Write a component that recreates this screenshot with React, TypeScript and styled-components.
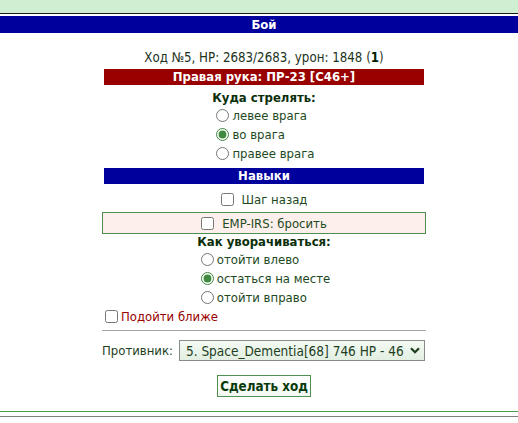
import React from 'react';
import styled, { createGlobalStyle } from 'styled-components';

const GlobalStyle = createGlobalStyle`
  html, body {
    margin: 0;
    padding: 0;
    background: #ffffff;
  }
  body {
    font-family: "DejaVu Sans Condensed", "DejaVu Sans", Verdana, sans-serif;
    font-stretch: condensed;
    font-size: 13px;
    color: #003300;
  }
  input, select, button {
    font-family: inherit;
    font-stretch: inherit;
  }
`;

const Page = styled('div')`
  width: 518px;
  height: 423px;
  overflow: hidden;
`;

const TopBand = styled('div')`
  height: 13px;
  background: #cfeed2;
  border-bottom: 1px solid #1a1a1a;
  margin-bottom: 2px;
`;

const TitleBar = styled('div')`
  height: 17px;
  line-height: 17px;
  padding-left: 10px;
  background: #00009c;
  color: #ffffff;
  font-weight: bold;
  text-align: center;
`;

const Main = styled('div')`
  padding-left: 10px;
`;

const Status = styled('div')`
  margin-top: 17px;
  line-height: 16px;
  text-align: center;
  color: #1c331c;
  font-size: 13.2px;

  b {
    color: #002200;
  }
`;

const Panel = styled('div')`
  width: 324px;
  margin: 3px auto 0;
  display: flex;
  flex-direction: column;
`;

const SectionBar = styled('div')<{ $tone: 'red' | 'navy' }>`
  height: 16px;
  line-height: 16px;
  margin: ${(p) => (p.$tone === 'navy' ? '5px' : '0')} 2px 0;
  background: ${(p) => (p.$tone === 'red' ? '#990000' : '#00009c')};
  color: #ffffff;
  font-weight: bold;
  text-align: center;
`;

const GroupTitle = styled('div')<{ $top?: number }>`
  padding-top: ${(p) => p.$top ?? 0}px;
  line-height: 16px;
  font-weight: bold;
  text-align: center;
  color: #0a2e0a;
`;

const OptionList = styled('div')`
  align-self: center;
  display: flex;
  flex-direction: column;
  padding-left: 3px;
`;

const Option = styled('label')`
  height: 19px;
  display: flex;
  align-items: center;
  color: #1e4a1e;

  input {
    width: 13px;
    height: 13px;
    margin: 0 3px 0 0;
    accent-color: #3f8a3f;
  }
`;

const SkillRow = styled('label')`
  height: 22px;
  margin-top: 4px;
  display: flex;
  align-items: center;
  justify-content: center;
  color: #1e4a1e;

  input {
    width: 13px;
    height: 13px;
    margin: 0 8px 0 0;
  }
`;

const SkillBox = styled(SkillRow)`
  height: 20px;
  margin-top: 2px;
  border: 1px solid #4f8f4f;
  background: #fdefec;
`;

const ApproachRow = styled('label')`
  height: 18px;
  display: flex;
  align-items: center;
  color: #990000;

  input {
    width: 13px;
    height: 13px;
    margin: 0 3px 0 3px;
  }
`;

const Rule = styled('div')`
  margin-top: 5px;
  border-top: 1px solid #a6a6a6;
`;

const TargetRow = styled('div')`
  margin-top: 9px;
  display: flex;
  align-items: center;
  gap: 6px;
  color: #1e3e1e;
`;

const SelectWrap = styled('div')`
  position: relative;
  width: 246px;
  height: 21px;
`;

const Select = styled('select')`
  appearance: none;
  width: 100%;
  height: 100%;
  margin: 0;
  padding: 0 18px 0 6px;
  border: 1px solid #8a8a8a;
  border-radius: 0;
  background: linear-gradient(#f4faf4, #e2efe2);
  color: #1e3e1e;
  font-size: 13.5px;
`;

const Chevron = styled('svg')`
  position: absolute;
  right: 5px;
  top: 7px;
  pointer-events: none;
`;

const SubmitRow = styled('div')`
  margin-top: 14px;
  display: flex;
  justify-content: center;
`;

const SubmitButton = styled('button')`
  height: 22px;
  padding: 0 2px;
  border: 1px solid #4f8f4f;
  background: linear-gradient(#ffffff, #f2f8f2);
  color: #0a3a0a;
  font-size: 13.3px;
  font-weight: bold;
`;

const FooterLines = styled('div')`
  margin-top: 14px;
  height: 4px;
  border-top: 1px solid #4c9a4c;
  border-bottom: 1px solid #808080;
`;

const aimOptions = [
  { id: 'left', label: 'левее врага' },
  { id: 'center', label: 'во врага' },
  { id: 'right', label: 'правее врага' },
];

const dodgeOptions = [
  { id: 'left', label: 'отойти влево' },
  { id: 'stay', label: 'остаться на месте' },
  { id: 'right', label: 'отойти вправо' },
];

const App: React.FC = () => {
  return (
    <Page>
      <GlobalStyle />
      <TopBand />
      <TitleBar>Бой</TitleBar>
      <Main>
        <Status>
          Ход №5, HP: 2683/2683, урон: 1848 (<b>1</b>)
        </Status>
        <Panel>
          <SectionBar $tone="red">Правая рука: ПР-23 [C46+]</SectionBar>
          <GroupTitle $top={5}>Куда стрелять:</GroupTitle>
          <OptionList>
            {aimOptions.map((o) => (
              <Option key={o.id}>
                <input type="radio" name="aim" defaultChecked={o.id === 'center'} />
                {o.label}
              </Option>
            ))}
          </OptionList>
          <SectionBar $tone="navy">Навыки</SectionBar>
          <SkillRow>
            <input type="checkbox" />
            Шаг назад
          </SkillRow>
          <SkillBox>
            <input type="checkbox" />
            EMP-IRS: бросить
          </SkillBox>
          <GroupTitle>Как уворачиваться:</GroupTitle>
          <OptionList>
            {dodgeOptions.map((o) => (
              <Option key={o.id}>
                <input type="radio" name="dodge" defaultChecked={o.id === 'stay'} />
                {o.label}
              </Option>
            ))}
          </OptionList>
          <ApproachRow>
            <input type="checkbox" />
            Подойти ближе
          </ApproachRow>
          <Rule />
          <TargetRow>
            Противник:
            <SelectWrap>
              <Select defaultValue="5">
                <option value="5">5. Space_Dementia[68] 746 HP - 46</option>
              </Select>
              <Chevron width="10" height="7" viewBox="0 0 10 7">
                <path d="M1 1.2 L5 5.2 L9 1.2" fill="none" stroke="#1e3e1e" strokeWidth="2.2" />
              </Chevron>
            </SelectWrap>
          </TargetRow>
          <SubmitRow>
            <SubmitButton type="button">Сделать ход</SubmitButton>
          </SubmitRow>
        </Panel>
      </Main>
      <FooterLines />
    </Page>
  );
};

export default App;
